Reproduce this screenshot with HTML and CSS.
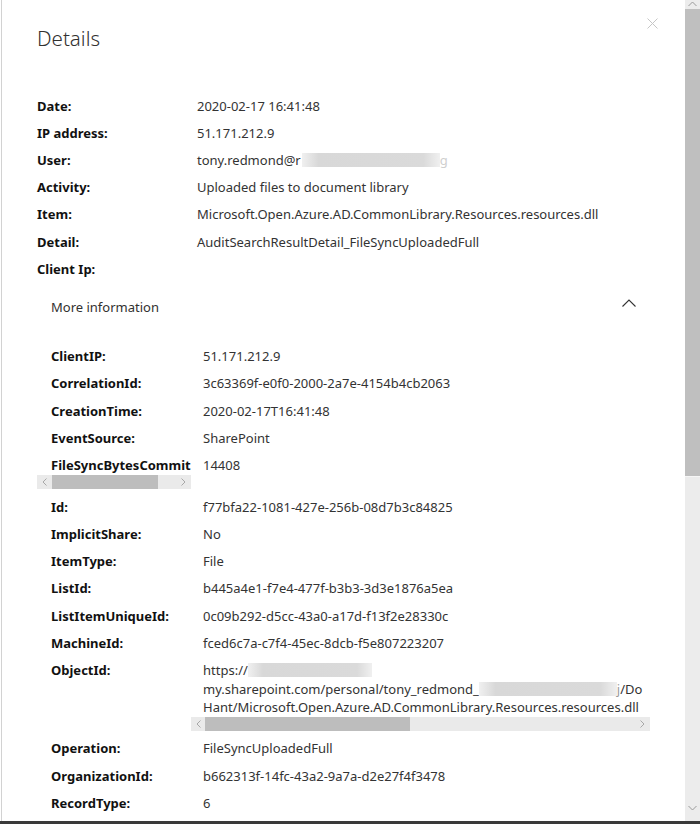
FILE: index.html
```html
<!DOCTYPE html>
<html lang="en">
<head>
<meta charset="utf-8">
<title>Details</title>
<link rel="stylesheet" href="styles.css">
</head>
<body>
<div class="frame">
  <div class="panel">
    <button class="close" aria-label="Close">
      <svg width="11" height="11" viewBox="0 0 11 11"><path d="M0.5 0.5 L10.5 10.5 M10.5 0.5 L0.5 10.5" stroke="#c6c6c6" stroke-width="1" fill="none"/></svg>
    </button>
    <h1 class="title">Details</h1>

    <div class="summary">
      <div class="s-label">Date:</div><div class="s-value">2020-02-17 16:41:48</div>
      <div class="s-label">IP address:</div><div class="s-value">51.171.212.9</div>
      <div class="s-label">User:</div><div class="s-value">tony.redmond@r<span class="blur blur-user"></span><span class="ghost">g</span></div>
      <div class="s-label">Activity:</div><div class="s-value">Uploaded files to document library</div>
      <div class="s-label">Item:</div><div class="s-value">Microsoft.Open.Azure.AD.CommonLibrary.Resources.resources.dll</div>
      <div class="s-label">Detail:</div><div class="s-value">AuditSearchResultDetail_FileSyncUploadedFull</div>
      <div class="s-label">Client Ip:</div><div class="s-value"></div>
    </div>

    <section class="more">
      <div class="more-head">
        <span>More information</span>
        <svg class="chev" width="14" height="8" viewBox="0 0 14 8"><path d="M0.5 7.5 L7 1 L13.5 7.5" stroke="#333" stroke-width="1.1" fill="none"/></svg>
      </div>
      <div class="props">
        <div class="p-label"><div class="txt">ClientIP:</div></div><div class="p-value"><div class="txt">51.171.212.9</div></div>
        <div class="p-label"><div class="txt">CorrelationId:</div></div><div class="p-value"><div class="txt">3c63369f-e0f0-2000-2a7e-4154b4cb2063</div></div>
        <div class="p-label"><div class="txt">CreationTime:</div></div><div class="p-value"><div class="txt">2020-02-17T16:41:48</div></div>
        <div class="p-label"><div class="txt">EventSource:</div></div><div class="p-value"><div class="txt">SharePoint</div></div>
        <div class="p-label">
          <div class="txt clip">FileSyncBytesCommit</div>
          <div class="hbar">
            <span class="arrow"><svg width="5" height="8" viewBox="0 0 5 8"><path d="M4.5 0.5 L1 4 L4.5 7.5" stroke="#a8a8a8" fill="none"/></svg></span>
            <span class="track"><span class="thumb thumb-small"></span></span>
            <span class="arrow"><svg width="5" height="8" viewBox="0 0 5 8"><path d="M0.5 0.5 L4 4 L0.5 7.5" stroke="#a8a8a8" fill="none"/></svg></span>
          </div>
        </div><div class="p-value"><div class="txt">14408</div></div>
        <div class="p-label"><div class="txt">Id:</div></div><div class="p-value"><div class="txt">f77bfa22-1081-427e-256b-08d7b3c84825</div></div>
        <div class="p-label"><div class="txt">ImplicitShare:</div></div><div class="p-value"><div class="txt">No</div></div>
        <div class="p-label"><div class="txt">ItemType:</div></div><div class="p-value"><div class="txt">File</div></div>
        <div class="p-label"><div class="txt">ListId:</div></div><div class="p-value"><div class="txt">b445a4e1-f7e4-477f-b3b3-3d3e1876a5ea</div></div>
        <div class="p-label"><div class="txt">ListItemUniqueId:</div></div><div class="p-value"><div class="txt">0c09b292-d5cc-43a0-a17d-f13f2e28330c</div></div>
        <div class="p-label"><div class="txt">MachineId:</div></div><div class="p-value"><div class="txt">fced6c7a-c7f4-45ec-8dcb-f5e807223207</div></div>
        <div class="p-label"><div class="txt">ObjectId:</div></div>
        <div class="p-value">
          <div class="txt clip">
            <div class="line">https://<span class="blur blur-host"></span></div>
            <div class="line">my.sharepoint.com/personal/tony_redmond_<span class="blur blur-path"></span><span class="ghost-dark">j</span>/Do</div>
            <div class="line">Hant/Microsoft.Open.Azure.AD.CommonLibrary.Resources.resources.dll</div>
          </div>
          <div class="hbar">
            <span class="arrow arrow-narrow"><svg width="5" height="8" viewBox="0 0 5 8"><path d="M4.5 0.5 L1 4 L4.5 7.5" stroke="#a8a8a8" fill="none"/></svg></span>
            <span class="track"><span class="thumb thumb-wide"></span></span>
            <span class="arrow"><svg width="5" height="8" viewBox="0 0 5 8"><path d="M0.5 0.5 L4 4 L0.5 7.5" stroke="#a8a8a8" fill="none"/></svg></span>
          </div>
        </div>
        <div class="p-label"><div class="txt">Operation:</div></div><div class="p-value"><div class="txt">FileSyncUploadedFull</div></div>
        <div class="p-label"><div class="txt">OrganizationId:</div></div><div class="p-value"><div class="txt">b662313f-14fc-43a2-9a7a-d2e27f4f3478</div></div>
        <div class="p-label"><div class="txt">RecordType:</div></div><div class="p-value"><div class="txt">6</div></div>
      </div>
    </section>
  </div>

  <div class="vscroll">
    <div class="v-up"><svg width="9" height="6" viewBox="0 0 9 6"><path d="M0.5 5 L4.5 1 L8.5 5" stroke="#9a9a9a" fill="none"/></svg></div>
    <div class="v-thumb"></div>
    <div class="v-track"></div>
    <div class="v-down"><svg width="9" height="6" viewBox="0 0 9 6"><path d="M0.5 1 L4.5 5 L8.5 1" stroke="#9a9a9a" fill="none"/></svg></div>
  </div>
</div>
</body>
</html>
```
FILE: styles.css
```css
html, body {
  margin: 0;
  padding: 0;
  background: #ffffff;
  overflow: hidden;
}

body {
  font-family: "Noto Sans", "Open Sans", sans-serif;
  font-size: 13px;
  color: #323130;
}

.frame {
  display: flex;
  height: 821px;
  border-bottom: 3px solid #3a3a3a;
}

.panel {
  flex: 1;
  min-width: 0;
  margin-left: 1px;
  border-left: 1px solid #d2d2d2;
  padding: 0 35px;
  position: relative;
  overflow: hidden;
}

.close {
  position: absolute;
  left: 645px;
  top: 18px;
  width: 11px;
  height: 11px;
  padding: 0;
  border: 0;
  background: none;
  display: block;
}
.close svg { display: block; }

.title {
  margin: 0;
  padding-top: 24px;
  font-size: 20.5px;
  line-height: 28px;
  font-weight: 300;
  color: #323130;
}

.summary {
  margin-top: 40px;
  display: grid;
  grid-template-columns: 160px 1fr;
  grid-auto-rows: 27.2px;
  align-items: center;
  line-height: 18px;
}

.s-label {
  font-weight: 700;
  color: #111;
}

.s-value {
  white-space: nowrap;
  color: #333;
}

.blur {
  display: inline-block;
  vertical-align: -2px;
  height: 14px;
  background: linear-gradient(90deg, #f0f0f0 0%, #d8d8d8 12%, #dadada 88%, #f0f0f0 100%);
  filter: blur(0.6px);
}
.blur-user { width: 138px; margin-left: 1px; }
.blur-host { width: 124px; }
.blur-path { width: 138px; }

.ghost { color: #cfcfcf; }
.ghost-dark { color: #9a9a9a; }

.more {
  margin-top: 8px;
}

.more-head {
  display: flex;
  align-items: center;
  justify-content: space-between;
  height: 34px;
  padding: 0 14px;
  color: #323130;
}
.chev { margin-top: -9px; display: block; }

.props {
  margin-top: 18.4px;
  display: grid;
  grid-template-columns: 154px 459px;
  align-items: start;
  line-height: 18.5px;
}

.p-label, .p-value {
  padding: 4.4px 0;
  min-width: 0;
}

.p-label .txt {
  padding-left: 14px;
  font-weight: 700;
  color: #111;
  white-space: nowrap;
}

.p-value .txt {
  padding-left: 12px;
  color: #333;
  white-space: nowrap;
}

.clip { overflow: hidden; }

.hbar {
  display: flex;
  height: 14px;
  background: #eaeaea;
}
.hbar .arrow {
  width: 15px;
  flex: none;
  display: flex;
  align-items: center;
  justify-content: center;
}
.hbar .arrow-narrow { width: 14px; }
.hbar .track {
  flex: 1;
  display: flex;
}
.thumb {
  display: block;
  height: 14px;
  background: #bdbdbd;
}
.thumb-small { width: 106px; }
.thumb-wide { width: 205px; }

.vscroll {
  width: 15px;
  flex: none;
  display: flex;
  flex-direction: column;
  background: #ececec;
}
.v-up {
  height: 9px;
  display: flex;
  align-items: flex-end;
  justify-content: center;
  overflow: hidden;
}
.v-up svg { display: block; margin-bottom: 2px; }
.v-thumb {
  height: 467px;
  background: #bfbfbf;
}
.v-track {
  flex: 1;
  border-top: 1px solid #f6f6f6;
}
.v-down {
  height: 16px;
  display: flex;
  align-items: flex-start;
  justify-content: center;
}
.v-down svg { display: block; }
```
